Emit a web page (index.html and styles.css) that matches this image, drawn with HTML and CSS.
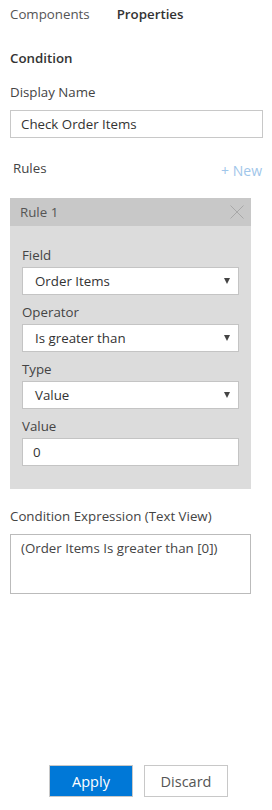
FILE: index.html
```html
<!DOCTYPE html>
<html lang="en">
<head>
    <meta charset="UTF-8">
    <meta name="viewport" content="width=device-width, initial-scale=1.0">
    <title>Condition Properties</title>
    <link rel="stylesheet" href="styles.css">
</head>
<body>
    <div id="panel">
        <div class="tabs">
            <span class="tab">Components</span>
            <span class="tab active">Properties</span>
        </div>

        <h2 class="section-title">Condition</h2>

        <label class="field-label">Display Name</label>
        <div class="text-box">Check Order Items</div>

        <div class="rules-head">
            <span class="rules-title">Rules</span>
            <span class="new-link">+ New</span>
        </div>

        <div class="rule">
            <div class="rule-header">
                <span>Rule 1</span>
                <svg class="close-icon" width="14" height="14" viewBox="0 0 14 14">
                    <path d="M0.5 0.5 L13.5 13.5 M13.5 0.5 L0.5 13.5" stroke="#a8a8a8" stroke-width="1" fill="none"/>
                </svg>
            </div>
            <div class="rule-body">
                <label class="rule-label">Field</label>
                <div class="select-box"><span>Order Items</span><span class="caret"></span></div>

                <label class="rule-label">Operator</label>
                <div class="select-box"><span>Is greater than</span><span class="caret"></span></div>

                <label class="rule-label">Type</label>
                <div class="select-box"><span>Value</span><span class="caret"></span></div>

                <label class="rule-label">Value</label>
                <div class="select-box value-box"><span>0</span></div>
            </div>
        </div>

        <label class="field-label expr-label">Condition Expression (Text View)</label>
        <div class="expr-box">(Order Items Is greater than [0])</div>

        <div class="actions">
            <button class="btn btn-primary">Apply</button>
            <button class="btn btn-default">Discard</button>
        </div>
    </div>
</body>
</html>
```

FILE: styles.css
```css
body {
    font-family: 'Open Sans', 'Noto Sans', sans-serif;
    font-size: 13.3px;
    color: #444;
    background-color: #fff;
    margin: 0;
    padding: 0;
}

#panel {
    width: 272px;
    height: 810px;
    display: flex;
    flex-direction: column;
    padding: 0 9px 0 10px;
    box-sizing: border-box;
}

.tabs {
    display: flex;
    gap: 27px;
    height: 28px;
    align-items: center;
}

.tab {
    color: #555;
}

.tab.active {
    color: #333;
    font-weight: 600;
}

.section-title {
    font-size: 13.3px;
    font-weight: 600;
    color: #333;
    margin: 16px 0 0 0;
    line-height: 28px;
}

.field-label {
    display: block;
    margin-top: 6px;
    line-height: 28px;
}

.text-box {
    height: 28px;
    border: 1px solid #c8c8c8;
    box-sizing: border-box;
    padding: 0 10px;
    line-height: 26px;
    color: #333;
    margin-top: 4px;
}

.rules-head {
    display: flex;
    justify-content: space-between;
    align-items: center;
    height: 30px;
    margin-top: 15px;
    padding-left: 3px;
}

.new-link {
    color: #9fc6ea;
    font-size: 14px;
    margin-top: 4px;
    margin-right: 1px;
}

.rule {
    width: 241px;
    margin-top: 15px;
    background-color: #dcdcdc;
}

.rule-header {
    height: 28px;
    background-color: #c8c8c8;
    display: flex;
    justify-content: space-between;
    align-items: center;
    padding: 0 7px 0 10px;
    color: #555;
}

.rule-body {
    padding: 19px 12px 23px 12px;
    display: flex;
    flex-direction: column;
}

.rule-label {
    line-height: 20px;
    margin-bottom: 2px;
}

.select-box {
    height: 28px;
    background-color: #fff;
    border: 1px solid #c4c4c4;
    box-sizing: border-box;
    display: flex;
    justify-content: space-between;
    align-items: center;
    padding: 0 8px 0 12px;
    color: #333;
    margin-bottom: 7px;
}

.value-box {
    margin-bottom: 0;
    padding-left: 10px;
}

.caret {
    width: 0;
    height: 0;
    border-left: 3px solid transparent;
    border-right: 3px solid transparent;
    border-top: 6px solid #444;
}

.expr-label {
    margin-top: 13px;
}

.expr-box {
    width: 241px;
    height: 60px;
    border: 1px solid #bbb;
    box-sizing: border-box;
    padding: 4px 10px;
    color: #444;
    margin-top: 4px;
}

.actions {
    margin-top: auto;
    margin-bottom: 13px;
    display: flex;
    justify-content: center;
    gap: 11px;
    padding-left: 4px;
}

.btn {
    width: 84px;
    height: 32px;
    font-family: inherit;
    font-size: 14.5px;
    border: 1px solid #c8c8c8;
    cursor: pointer;
}

.btn-primary {
    background-color: #0078d7;
    color: #fff;
}

.btn-default {
    background-color: #fff;
    color: #555;
}
```
